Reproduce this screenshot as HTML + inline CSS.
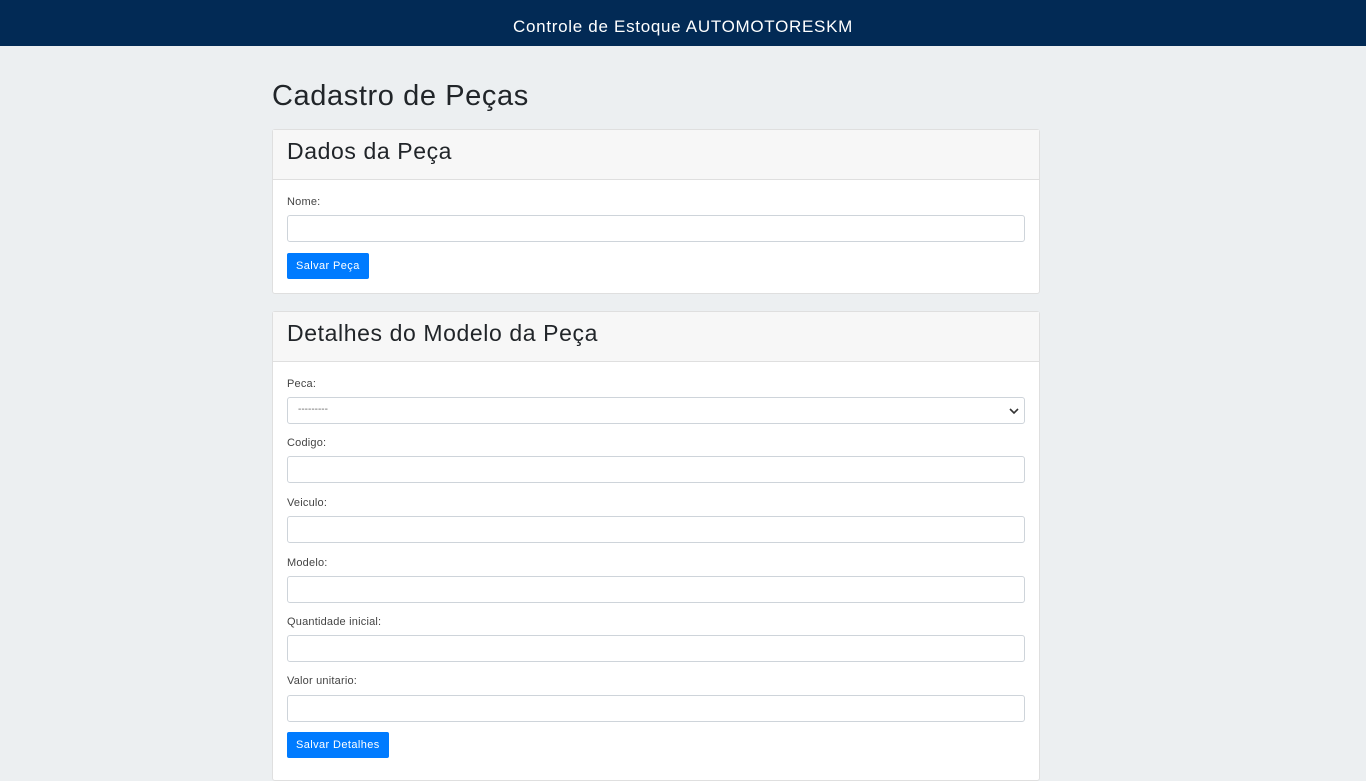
<!DOCTYPE html>
<html><head><meta charset="utf-8"><style>
*{box-sizing:border-box;margin:0;padding:0}
body{width:1366px;height:768px;overflow:hidden;background:#eceff1;font-family:"Liberation Sans",Arial,sans-serif;color:#212529;position:relative}
.top{position:absolute;left:0;top:0;width:1366px;height:46px;background:#022a55;color:#fff;font-size:17px;text-align:center;line-height:56px;letter-spacing:.7px}
.top span{position:relative;top:-1px}
h1{position:absolute;left:272px;top:80px;font-size:29px;font-weight:400;letter-spacing:.6px}
.card{position:absolute;left:272px;width:768px;background:#fff;border:1px solid #dfdfdf;border-radius:3px}
.ch{height:50px;background:#f7f7f7;border-bottom:1px solid #dfdfdf;font-size:23px;padding:8px 14px;letter-spacing:.6px}
.a{position:absolute;left:14px}
.lbl{font-size:11px;color:#444;letter-spacing:.2px}
.in{width:738px;height:27px;border:1px solid #ced4da;border-radius:3px;background:#fff}
.btn{background:#007bff;color:#fff;font-size:11px;border-radius:2px;height:26px;line-height:26px;padding:0 9px;letter-spacing:.4px}
.sel{font-size:10px;color:#666;padding-left:10px;line-height:24px}
.sel svg{position:absolute;right:5px;top:9px}
</style></head><body>
<div class="top"><span>Controle de Estoque AUTOMOTORESKM</span></div>
<h1>Cadastro de Peças</h1>
<div class="card" style="top:129px;height:165px">
<div class="ch">Dados da Peça</div>
<div class="a lbl" style="top:66px">Nome:</div>
<div class="a in" style="top:85px"></div>
<div class="a btn" style="top:123px">Salvar Peça</div>
</div>
<div class="card" style="top:311px;height:470px">
<div class="ch">Detalhes do Modelo da Peça</div>
<div class="a lbl" style="top:66px">Peca:</div>
<div class="a in sel" style="top:85px">---------<svg width="10" height="8" viewBox="0 0 10 8"><path d="M1 2l4 4 4-4" stroke="#333" stroke-width="1.6" fill="none"/></svg></div>
<div class="a lbl" style="top:125px">Codigo:</div>
<div class="a in" style="top:144px"></div>
<div class="a lbl" style="top:185px">Veiculo:</div>
<div class="a in" style="top:204px"></div>
<div class="a lbl" style="top:245px">Modelo:</div>
<div class="a in" style="top:264px"></div>
<div class="a lbl" style="top:304px">Quantidade inicial:</div>
<div class="a in" style="top:323px"></div>
<div class="a lbl" style="top:363px">Valor unitario:</div>
<div class="a in" style="top:383px"></div>
<div class="a btn" style="top:420px">Salvar Detalhes</div>
</div>
</body></html>
